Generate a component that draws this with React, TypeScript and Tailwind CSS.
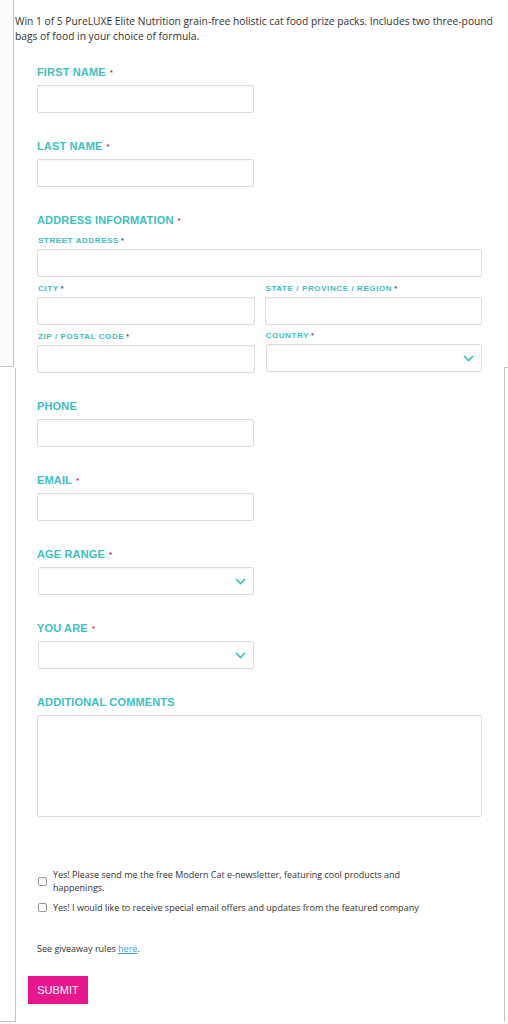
import React from "react";

const labelCls =
  "block h-[13px] leading-[13px] text-[11px] font-bold tracking-[0.15px] text-[#3dbfbf] font-['Liberation_Sans',Arial,sans-serif]";
const subLabelCls =
  "block h-[10px] leading-[10px] text-[8px] font-bold tracking-[0.6px] text-[#3dbfbf] font-['Liberation_Sans',Arial,sans-serif]";
const inputCls =
  "block h-[28px] w-full border border-[#dddddd] rounded-[2px] bg-white shadow-[inset_0_1px_1px_rgba(0,0,0,0.03)] outline-none";

function Req() {
  return <span className="ml-[4px] text-[8px] align-top text-[#c8344f]">*</span>;
}
function SubReq() {
  return <span className="ml-[2px] text-[7px] align-top text-[#555]">*</span>;
}

function Chevron() {
  return (
    <svg width="11" height="7" viewBox="0 0 11 7" className="absolute right-[8px] top-[11px]">
      <path d="M1 1 L5.5 5.5 L10 1" fill="none" stroke="#3dbfbf" strokeWidth="1.6" />
    </svg>
  );
}

function Select({ className = "" }: { className?: string }) {
  return (
    <div className={"relative " + className}>
      <div className={inputCls}></div>
      <Chevron />
    </div>
  );
}

function Field({ label, req = true, select = false }: { label: string; req?: boolean; select?: boolean }) {
  return (
    <div className="mb-[27px]">
      <label className={labelCls}>
        {label}
        {req && <Req />}
      </label>
      <div className="mt-[6px] w-[217px]">
        {select ? <Select className="ml-[1px]" /> : <input className={inputCls} />}
      </div>
    </div>
  );
}

export default function App() {
  return (
    <div className="relative w-[508px] h-[1024px] bg-white overflow-hidden font-['Open_Sans',sans-serif] text-[#333]">
      {/* decorative frame seams */}
      <div className="absolute left-0 top-0 w-[14px] h-[367px] bg-[#fbfbfb] border-r-[1.5px] border-b border-[#c4c4c4]"></div>
      <div className="absolute left-[15px] top-[368px] w-[1px] h-[653px] bg-[#c4c4c4]"></div>
      <div className="absolute left-0 top-[1021px] w-[16px] h-[1px] bg-[#c4c4c4]"></div>
      <div className="absolute left-[504px] top-[367px] w-[4px] h-[1px] bg-[#c4c4c4]"></div>
      <div className="absolute left-[504px] top-[367px] w-[1px] h-[655px] bg-[#c4c4c4]"></div>

      <p className="relative pt-[14px] pl-[15px] pr-[4px] text-[10.25px] leading-[15px] text-[#333]">
        Win 1 of 5 PureLUXE Elite Nutrition grain-free holistic cat food prize packs. Includes two{" "}
        <span className="whitespace-nowrap">three-pound</span> bags of food in your choice of formula.
      </p>

      <form className="relative pl-[37px] pr-[26px] pt-[22px]">
        <Field label="FIRST NAME" />
        <Field label="LAST NAME" />

        <div className="mb-[27px]">
          <label className={labelCls}>
            ADDRESS INFORMATION
            <Req />
          </label>
          <div className="mt-[9px]">
            <span className={subLabelCls + " pl-[1px]"}>
              STREET ADDRESS
              <SubReq />
            </span>
            <input className={inputCls + " mt-[3px]"} />
          </div>
          <div className="mt-[7px] grid grid-cols-2 gap-x-[10px] gap-y-[7px]">
            <div>
              <span className={subLabelCls + " pl-[1px]"}>
                CITY
                <SubReq />
              </span>
              <input className={inputCls + " mt-[3px]"} />
            </div>
            <div>
              <span className={subLabelCls + " pl-[1px]"}>
                STATE / PROVINCE / REGION
                <SubReq />
              </span>
              <input className={inputCls + " mt-[3px]"} />
            </div>
            <div>
              <span className={subLabelCls + " pl-[1px]"}>
                ZIP / POSTAL CODE
                <SubReq />
              </span>
              <input className={inputCls + " mt-[3px]"} />
            </div>
            <div>
              <span className={subLabelCls + " pl-[1px] -mt-[1px] mb-[1px]"}>
                COUNTRY
                <SubReq />
              </span>
              <Select className="mt-[3px] ml-[1px]" />
            </div>
          </div>
        </div>

        <Field label="PHONE" req={false} />
        <Field label="EMAIL" />
        <Field label="AGE RANGE" select />
        <Field label="YOU ARE" select />

        <div>
          <label className={labelCls}>ADDITIONAL COMMENTS</label>
          <textarea className="mt-[6px] block h-[102px] w-full resize-none border border-[#dddddd] rounded-[2px] bg-white outline-none"></textarea>
        </div>

        <div className="mt-[51px] text-[9px] leading-[13px] text-[#333]">
          <label className="flex items-center">
            <span className="w-[9px] h-[9px] shrink-0 ml-[1px] border border-[#999] rounded-[2px] bg-white"></span>
            <span className="ml-[6px] max-w-[372px]">
              Yes! Please send me the free Modern Cat e-newsletter, featuring cool products and happenings.
            </span>
          </label>
          <label className="mt-[7px] flex items-center">
            <span className="w-[9px] h-[9px] shrink-0 ml-[1px] border border-[#999] rounded-[2px] bg-white"></span>
            <span className="ml-[6px]">Yes! I would like to receive special email offers and updates from the featured company</span>
          </label>
          <p className="mt-[28px]">
            See giveaway rules <a className="text-[#3b9cf0] underline">here</a>.
          </p>
        </div>

        <button
          type="button"
          className="mt-[21px] -ml-[9px] h-[28px] w-[60px] bg-[#e8168c] text-white text-[11px] font-['Liberation_Sans',Arial,sans-serif] flex items-center justify-center"
        >
          SUBMIT
        </button>
      </form>
    </div>
  );
}
